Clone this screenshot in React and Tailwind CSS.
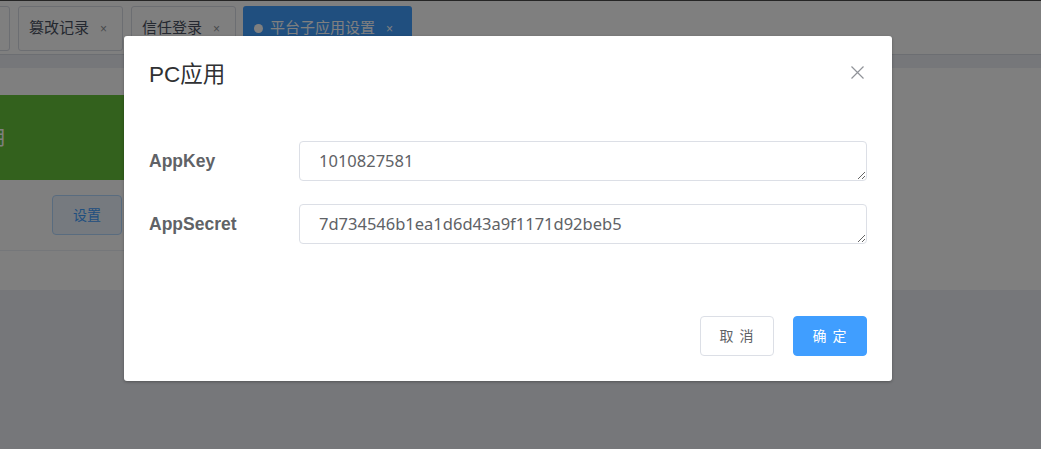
import React from "react";

const tabs = [
  { label: "篡改记录", active: false },
  { label: "信任登录", active: false },
];

const Tab = ({ label, className = "" }) => (
  <div
    className={`flex h-[45px] w-[105px] shrink-0 items-center rounded-[3px] border border-[#d8dce5] bg-white pl-[10px] text-[15px] text-[#495060] ${className}`}
  >
    <span>{label}</span>
    <span className="ml-[11px] text-[12px] text-[#909399]">×</span>
  </div>
);

const Field = ({ label, value }) => (
  <div className="flex items-center">
    <label className="w-[150px] shrink-0 text-[17.5px] font-bold text-[#606266]">{label}</label>
    <textarea
      defaultValue={value}
      rows={1}
      className="h-[40px] flex-1 rounded-[4px] border border-[#dcdfe6] bg-white px-[19px] py-[7px] text-[16.5px] leading-[24px] text-[#606266] outline-none"
      style={{ fontFamily: '"Noto Sans", "Noto Sans CJK SC", sans-serif' }}
    />
  </div>
);

export default function App() {
  return (
    <div
      className="relative h-[449px] w-full overflow-hidden bg-[#eceff5]"
      style={{ fontFamily: '"Liberation Sans", "Noto Sans CJK SC", sans-serif' }}
    >
      {/* Page under the mask */}
      <div className="h-px bg-[#4a4a4a]" />
      <div className="flex h-[54px] items-start gap-[8px] border-b border-[#d8dce5] bg-white pt-[5px]">
        <Tab label="操作日志" className="-ml-[95px]" />
        {tabs.map((t) => (
          <Tab key={t.label} label={t.label} />
        ))}
        <div className="-ml-[1px] flex h-[45px] w-[169px] shrink-0 items-center rounded-[3px] bg-[#409eff] pl-[11px] text-[15px] text-white">
          <span className="mr-[7px] h-[9px] w-[9px] rounded-full bg-white" />
          <span>平台子应用设置</span>
          <span className="ml-[11px] text-[12px]">×</span>
        </div>
      </div>
      <div className="h-[13px] bg-[#eceff5]" />
      <div className="h-[222px] bg-white pt-[27px]">
        <div className="-ml-[200px] w-[330px]">
          <div className="flex h-[85px] items-center bg-[#67c23a] pl-[138px] text-[20px] text-white">
            PC应用
          </div>
          <div className="flex h-[71px] items-center justify-end border-b border-[#ebeef5] pr-[8px]">
            <button className="h-[40px] w-[70px] rounded-[4px] border border-[#b3d8ff] bg-[#ecf5ff] text-[14px] text-[#409eff]">
              设置
            </button>
          </div>
        </div>
      </div>

      {/* Mask + dialog */}
      <div className="absolute inset-0 bg-black/50">
        <div className="relative ml-[124px] mt-[36px] w-[768px] rounded-[3px] bg-white shadow-[0_1px_3px_rgba(0,0,0,0.3)]">
          <div className="px-[25px] pt-[24px]">
            <span className="text-[22.5px] leading-[30px] text-[#303133]">PC应用</span>
          </div>
          <button className="absolute right-[28px] top-[30px] text-[#909399]">
            <svg width="13" height="13" viewBox="0 0 13 13" fill="none" stroke="currentColor" strokeWidth="1.2">
              <path d="M0.5 0.5L12.5 12.5M12.5 0.5L0.5 12.5" />
            </svg>
          </button>
          <div className="flex flex-col gap-[23px] pl-[25px] pr-[25px] pt-[51px]">
            <Field label="AppKey" value="1010827581" />
            <Field label="AppSecret" value="7d734546b1ea1d6d43a9f1171d92beb5" />
          </div>
          <div className="flex justify-end gap-[19px] px-[25px] pb-[25px] pt-[72px]">
            <button className="h-[40px] w-[74px] rounded-[4px] border border-[#dcdfe6] bg-white text-[14px] tracking-[1px] text-[#606266]">
              取 消
            </button>
            <button className="h-[40px] w-[74px] rounded-[4px] border border-[#409eff] bg-[#409eff] text-[14px] tracking-[1px] text-white">
              确 定
            </button>
          </div>
        </div>
      </div>
    </div>
  );
}
